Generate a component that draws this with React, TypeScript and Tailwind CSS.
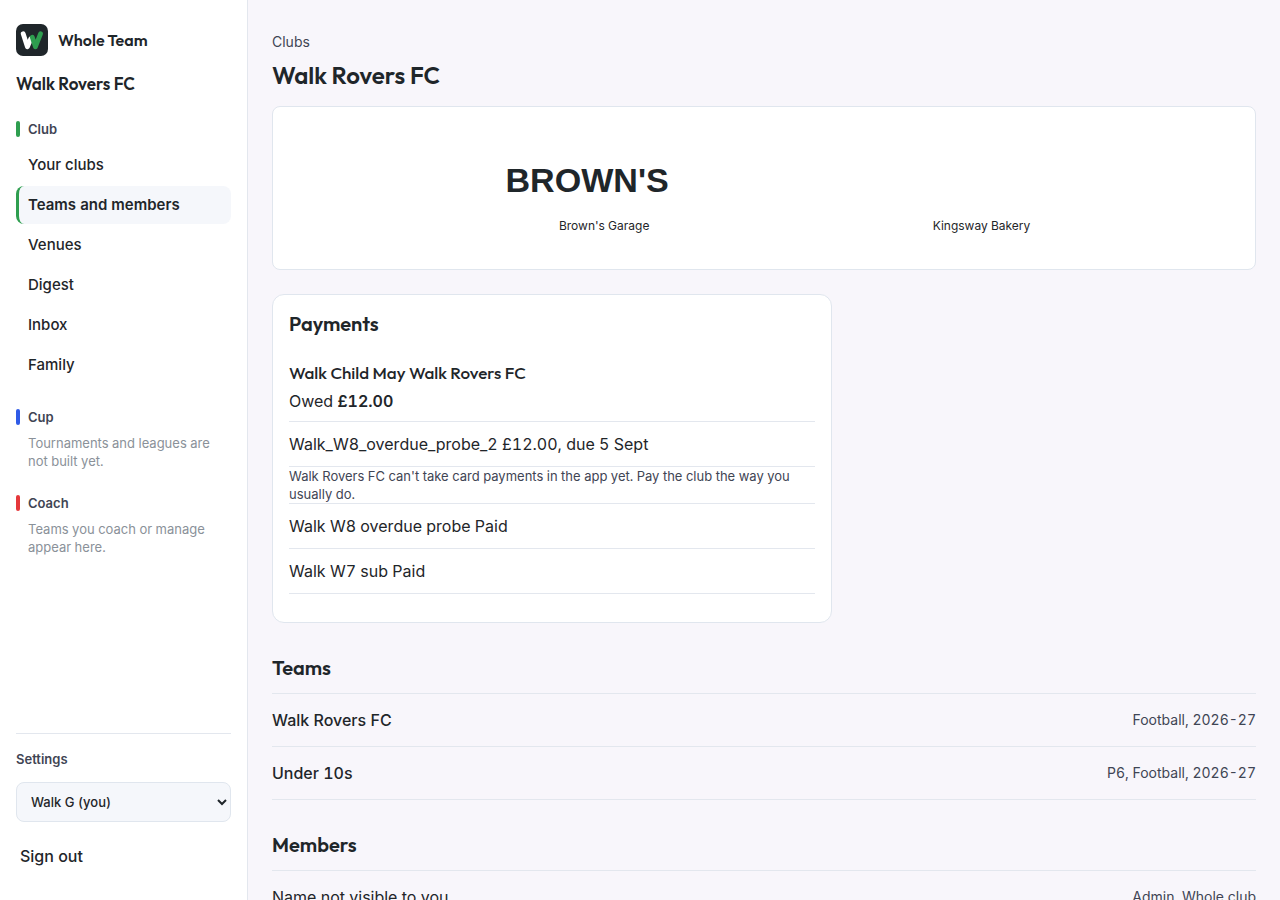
import type { ReactNode } from "react";

const navItems = ["Your clubs", "Teams and members", "Venues", "Digest", "Inbox", "Family"];
const activeItem = "Teams and members";

const teams = [
  { name: "Walk Rovers FC", detail: "Football, 2026-27" },
  { name: "Under 10s", detail: "P6, Football, 2026-27" },
];

const members = [{ name: "Name not visible to you", detail: "Admin, Whole club" }];

function Logo() {
  return (
    <svg viewBox="0 0 32 32" className="size-8 shrink-0" aria-hidden="true">
      <rect width="32" height="32" rx="7" fill="#1f262a" />
      <path d="M7.2 9.8 11.4 22.8 14.8 14.8" fill="none" stroke="#fff" strokeWidth="4.8" strokeLinecap="round" strokeLinejoin="round" />
      <path d="M16.3 13.2 19.4 22.8 24.5 9.8" fill="none" stroke="#2e9e4f" strokeWidth="4.8" strokeLinecap="round" strokeLinejoin="round" />
    </svg>
  );
}

function SectionLabel({ bar, children }: { bar: string; children: ReactNode }) {
  return (
    <h2 className="mb-2 flex items-center gap-2 text-[13px] leading-[18px] font-semibold text-[#3f4554]">
      <span className={`h-4 w-1 rounded-[2px] ${bar}`} />
      {children}
    </h2>
  );
}

function Sidebar() {
  return (
    <aside className="sticky top-0 flex h-screen w-[248px] shrink-0 flex-col border-r border-[#e3e7ee] bg-white px-4 pt-6 pb-[22px]">
      <a href="#home" className="flex items-center gap-2.5 font-['Outfit',sans-serif] text-base font-semibold">
        <Logo />
        Whole Team
      </a>
      <p className="mt-4 font-['Outfit',sans-serif] text-[17px] leading-6 font-semibold">Walk Rovers FC</p>

      <nav className="mt-6" aria-label="Club">
        <SectionLabel bar="bg-[#2e9e4f]">Club</SectionLabel>
        <ul className="flex flex-col gap-0.5">
          {navItems.map((item) => (
            <li key={item}>
              <a
                href="#nav"
                aria-current={item === activeItem ? "page" : undefined}
                className={
                  item === activeItem
                    ? "flex h-[38px] items-center rounded-lg border-l-[3px] border-[#2e9e4f] bg-[#f5f7fb] pl-[9px] text-[15px] font-semibold"
                    : "flex h-[38px] items-center rounded-lg pl-3 text-[15px] font-medium"
                }
              >
                {item}
              </a>
            </li>
          ))}
        </ul>
      </nav>

      <section className="mt-6">
        <SectionLabel bar="bg-[#2f5be7]">Cup</SectionLabel>
        <p className="pl-3 text-[13px] leading-[18px] text-[#8a9199]">Tournaments and leagues are not built yet.</p>
      </section>
      <section className="mt-6">
        <SectionLabel bar="bg-[#e5383b]">Coach</SectionLabel>
        <p className="pl-3 text-[13px] leading-[18px] text-[#8a9199]">Teams you coach or manage appear here.</p>
      </section>

      <div className="mt-auto border-t border-[#e3e7ee] pt-4">
        <label htmlFor="account" className="block text-[13px] leading-[18px] font-semibold text-[#3f4554]">
          Settings
        </label>
        <select
          id="account"
          className="mt-3.5 block h-10 w-full rounded-lg border border-[#e0e6ee] bg-[#f5f7fb] pl-2.5 text-[13px] font-medium"
        >
          <option>Walk G (you)</option>
        </select>
        <button type="button" className="mt-3 flex h-11 items-center px-1 text-base font-medium">
          Sign out
        </button>
      </div>
    </aside>
  );
}

function Sponsors() {
  return (
    <section
      aria-label="Sponsors"
      className="flex justify-center gap-[222px] rounded-lg border border-[#e0e6ee] bg-white pt-[42px] pb-[34px] text-xs leading-[18px]"
    >
      <figure className="flex flex-col items-center gap-1">
        <svg viewBox="0 0 200 60" className="h-16 w-[213px]">
          <text x="7" y="40" fontSize="32" fontWeight="700" fill="#1f262a" className="font-['Liberation_Sans',sans-serif]">
            BROWN'S
          </text>
        </svg>
        <figcaption>Brown's Garage</figcaption>
      </figure>
      <p className="self-end">Kingsway Bakery</p>
    </section>
  );
}

function Payments() {
  return (
    <section className="mt-6 max-w-[560px] rounded-xl border border-[#e0e6ee] bg-white p-4">
      <h2 className="font-['Outfit',sans-serif] text-xl leading-[26px] font-semibold">Payments</h2>
      <h3 className="mt-6 font-['Outfit',sans-serif] text-[17px] leading-6 font-medium">Walk Child May Walk Rovers FC</h3>
      <p className="mt-1">
        Owed <strong className="font-semibold">£12.00</strong>
      </p>
      <ul className="mt-2 mb-3 divide-y divide-[#e3e7ee] border-y border-[#e3e7ee]">
        <li className="py-2.5">Walk_W8_overdue_probe_2 £12.00, due 5 Sept</li>
        <li className="text-[13px] leading-[18px] text-[#3f4554]">
          Walk Rovers FC can't take card payments in the app yet. Pay the club the way you usually do.
        </li>
        <li className="py-2.5">Walk W8 overdue probe Paid</li>
        <li className="py-2.5">Walk W7 sub Paid</li>
      </ul>
    </section>
  );
}

function ListSection({
  title,
  rows,
  nameClass = "",
}: {
  title: string;
  rows: { name: string; detail: string }[];
  nameClass?: string;
}) {
  return (
    <section className="mt-8">
      <h2 className="mb-3 font-['Outfit',sans-serif] text-xl leading-[26px] font-semibold">{title}</h2>
      <ul className="divide-y divide-[#e3e7ee] border-y border-[#e3e7ee]">
        {rows.map((row) => (
          <li key={row.name} className="box-content flex h-[52px] items-center justify-between gap-4">
            <span className={nameClass}>{row.name}</span>
            <span className="text-sm text-[#3f4554]">{row.detail}</span>
          </li>
        ))}
      </ul>
    </section>
  );
}

export default function App() {
  return (
    <div className="flex min-h-screen bg-[#f8f6fb] font-['Inter',sans-serif] text-base text-[#1f262a] tabular-nums">
      <Sidebar />
      <main className="min-w-0 flex-1 px-6 pt-8">
        <a href="#clubs" className="block text-sm text-[#3f4554]">
          Clubs
        </a>
        <h1 className="mt-2 mb-4 font-['Outfit',sans-serif] text-2xl leading-[30px] font-semibold">Walk Rovers FC</h1>
        <Sponsors />
        <Payments />
        <ListSection title="Teams" rows={teams} nameClass="font-medium" />
        <ListSection title="Members" rows={members} />
      </main>
    </div>
  );
}
